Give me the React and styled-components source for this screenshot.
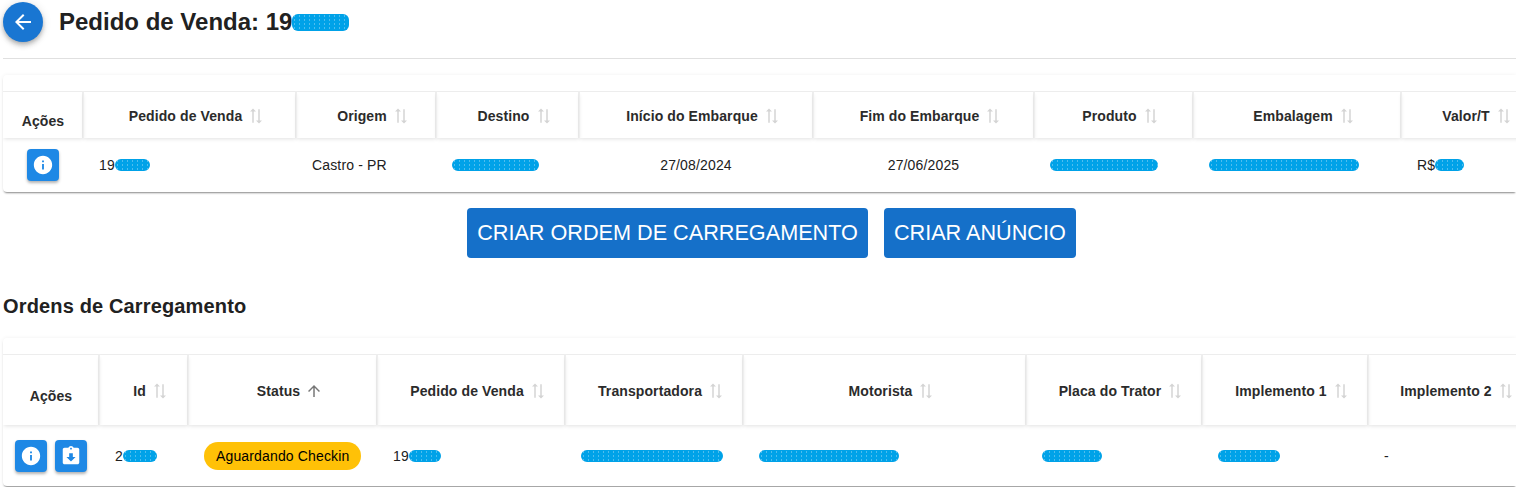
import styled, { createGlobalStyle } from 'styled-components';

const GlobalStyle = createGlobalStyle`
    html, body {
        margin: 0;
        height: 487px;
        overflow: hidden;
        background: #fff;
        font-family: "Liberation Sans", Arial, sans-serif;
        color: #212121;
    }
`
const Page = styled.main`
    width: 1513px;
    padding-left: 3px;
    padding-top: 2px;
`
const TopBar = styled.header`
    display: flex;
    align-items: flex-start;
    gap: 16px;
    height: 56px;
    border-bottom: 1px solid #e0e0e0;
`
const BackButton = styled.button`
    width: 40px;
    height: 40px;
    padding: 0;
    border: 0;
    border-radius: 50%;
    background: #1976d2;
    color: #fff;
    display: flex;
    align-items: center;
    justify-content: center;
    box-shadow: 0 2px 4px -1px rgba(0,0,0,.2), 0 4px 5px 0 rgba(0,0,0,.14), 0 1px 10px 0 rgba(0,0,0,.12);
`
const Titulo = styled.h1`
    margin: 0;
    font-size: 24px;
    font-weight: 700;
    line-height: 40px;
    display: flex;
    align-items: center;
`
const Paper = styled.section`
    margin-top: ${props => props.$top}px;
    padding-top: 16px;
    padding-bottom: ${props => props.$bottom || 0}px;
    overflow: hidden;
    background: #fff;
    box-shadow: 0 2px 2px -1px rgba(0,0,0,.45), 0 0 4px rgba(0,0,0,.06);
    border-radius: 4px 0 0 4px;
`
const Grid = styled.div`
    display: grid;
    grid-template-columns: ${props => props.$cols};
    grid-template-rows: ${props => props.$head}px ${props => props.$body}px;
    border-top: 1px solid #eeeeee;
    width: max-content;
`
const HeadCell = styled.div`
    display: flex;
    align-items: center;
    justify-content: center;
    margin-right: -1px;
    padding: 2px 0 0 16px;
    gap: 5px;
    font-size: 14px;
    font-weight: 700;
    letter-spacing: .1px;
    color: #2b2b2b;
    border-right: 2px solid #eeeeee;
    box-shadow: 0 2px 4px -1px rgba(0,0,0,.12);
    svg { flex: none; }
`
const AcoesCell = styled(HeadCell)`
    padding: 12px 0 0 1px;
`
const SortIcon = styled.svg`
    width: 18px;
    height: 18px;
    fill: currentColor;
    color: ${props => props.$active ? '#777' : '#d4d4d4'};
    transform: ${props => props.$active ? 'none' : 'rotate(90deg)'};
`
const Cell = styled.div`
    display: flex;
    align-items: center;
    justify-content: ${props => props.$center ? 'center' : 'flex-start'};
    padding: 0 16px;
    font-size: 14px;
    letter-spacing: .15px;
    color: #212121;
`
const ActionsCell = styled(Cell)`
    justify-content: center;
    padding: 0;
    gap: 8px;
`
const IconButton = styled.button`
    width: 32px;
    height: 32px;
    padding: 0;
    border: 0;
    border-radius: 4px;
    background: #1e88e5;
    color: #fff;
    display: flex;
    align-items: center;
    justify-content: center;
    box-shadow: 0 2px 3px rgba(0,0,0,.3);
    svg { width: 22px; height: 22px; fill: currentColor; }
`
const Blob = styled.span`
    display: inline-block;
    width: ${props => props.$w}px;
    height: ${props => props.$h || 12}px;
    border-radius: 6px;
    background-color: #00a2e8;
    background-image: radial-gradient(rgba(255,255,255,.35) .6px, transparent .8px);
    background-size: 5px 4px;
`
const ButtonRow = styled.div`
    display: flex;
    justify-content: center;
    gap: 16px;
    margin-top: 16px;
    padding-left: 24px;
`
const BigButton = styled.button`
    height: 50px;
    padding: 0 10px;
    border: 0;
    border-radius: 4px;
    background: #1570c9;
    color: #fff;
    font-family: "Liberation Sans", Arial, sans-serif;
    font-size: 21.65px;
    text-transform: uppercase;
`
const Subtitulo = styled.h2`
    margin: 36px 0 0;
    font-size: 20px;
    font-weight: 700;
    line-height: 24px;
    letter-spacing: .15px;
`
const Chip = styled.span`
    display: inline-flex;
    align-items: center;
    height: 28px;
    padding: 0 12px;
    border-radius: 14px;
    background: #ffc107;
    color: #000;
    font-size: 14px;
    letter-spacing: .15px;
    white-space: nowrap;
`

const ICONE_ORDENAR = 'm18 12 4-4-4-4v3H3v2h15zM6 12l-4 4 4 4v-3h15v-2H6z'
const ICONE_SUBIR = 'M4 12l1.41 1.41L11 7.83V20h2V7.83l5.58 5.59L20 12l-8-8-8 8z'
const ICONE_INFO = 'M12 2C6.48 2 2 6.48 2 12s4.48 10 10 10 10-4.48 10-10S17.52 2 12 2zm1 15h-2v-6h2v6zm0-8h-2V7h2v2z'
const ICONE_BAIXAR = 'M19 3h-4.18C14.4 1.84 13.3 1 12 1c-1.3 0-2.4.84-2.82 2H5c-1.1 0-2 .9-2 2v14c0 1.1.9 2 2 2h14c1.1 0 2-.9 2-2V5c0-1.1-.9-2-2-2zm-7 0c.55 0 1 .45 1 1s-.45 1-1 1-1-.45-1-1 .45-1 1-1zm0 15l-5-5h3V9h4v4h3l-5 5z'

const Acao = ({ d }) => (
    <IconButton>
        <svg viewBox="0 0 24 24"><path d={d} /></svg>
    </IconButton>
)

const Cabecalho = ({ titulo, ativo }) => (
    <HeadCell>
        {titulo}
        <SortIcon viewBox="0 0 24 24" $active={ativo}>
            <path d={ativo ? ICONE_SUBIR : ICONE_ORDENAR} />
        </SortIcon>
    </HeadCell>
)

const colunasPedido = ['Pedido de Venda', 'Origem', 'Destino', 'Início do Embarque', 'Fim do Embarque', 'Produto', 'Embalagem', 'Valor/T']
const colunasOrdem = ['Id', 'Status', 'Pedido de Venda', 'Transportadora', 'Motorista', 'Placa do Trator', 'Implemento 1', 'Implemento 2']

export default function App() {
    return (
        <Page>
            <GlobalStyle />
            <TopBar>
                <BackButton>
                    <svg viewBox="0 0 24 24" width="24" height="24" fill="currentColor">
                        <path d="M20 11H7.83l5.59-5.59L12 4l-8 8 8 8 1.41-1.41L7.83 13H20v-2z" />
                    </svg>
                </BackButton>
                <Titulo>Pedido de Venda: 19<Blob $w={57} $h={17} /></Titulo>
            </TopBar>

            <Paper $top={16} $bottom={1}>
                <Grid $cols="80px 213px 140px 143px 234px 221px 159px 208px 138px" $head={46} $body={53}>
                    <AcoesCell>Ações</AcoesCell>
                    {colunasPedido.map(titulo => <Cabecalho key={titulo} titulo={titulo} />)}

                    <ActionsCell><Acao d={ICONE_INFO} /></ActionsCell>
                    <Cell>19<Blob $w={35} /></Cell>
                    <Cell>Castro - PR</Cell>
                    <Cell><Blob $w={87} /></Cell>
                    <Cell $center>27/08/2024</Cell>
                    <Cell $center>27/06/2025</Cell>
                    <Cell><Blob $w={108} /></Cell>
                    <Cell><Blob $w={150} /></Cell>
                    <Cell>R$<Blob $w={29} /></Cell>
                </Grid>
            </Paper>

            <ButtonRow>
                <BigButton>Criar ordem de carregamento</BigButton>
                <BigButton>Criar anúncio</BigButton>
            </ButtonRow>

            <Subtitulo>Ordens de Carregamento</Subtitulo>

            <Paper $top={20}>
                <Grid $cols="96px 89px 189px 188px 178px 283px 176px 166px 164px" $head={70} $body={61}>
                    <AcoesCell>Ações</AcoesCell>
                    {colunasOrdem.map(titulo => <Cabecalho key={titulo} titulo={titulo} ativo={titulo === 'Status'} />)}

                    <ActionsCell><Acao d={ICONE_INFO} /><Acao d={ICONE_BAIXAR} /></ActionsCell>
                    <Cell>2<Blob $w={34} /></Cell>
                    <Cell><Chip>Aguardando Checkin</Chip></Cell>
                    <Cell>19<Blob $w={32} /></Cell>
                    <Cell><Blob $w={142} /></Cell>
                    <Cell><Blob $w={140} /></Cell>
                    <Cell><Blob $w={60} /></Cell>
                    <Cell><Blob $w={62} /></Cell>
                    <Cell>-</Cell>
                </Grid>
            </Paper>
        </Page>
    )
}
